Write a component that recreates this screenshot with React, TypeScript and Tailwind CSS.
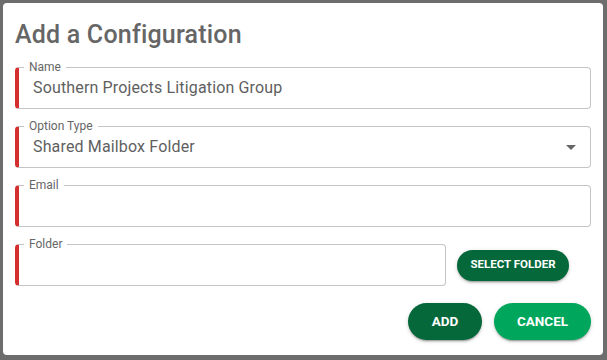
import React from 'react';

const btnShadow =
  'shadow-[0_3px_1px_-2px_rgba(0,0,0,0.2),0_2px_2px_0_rgba(0,0,0,0.14),0_1px_5px_0_rgba(0,0,0,0.12)]';

const Field: React.FC<{ label: string; value?: string; select?: boolean; className?: string }> = ({
  label,
  value,
  select,
  className = '',
}) => (
  <div
    className={`relative flex items-center h-[42px] rounded-[4px] border border-[#c4c4c4] border-l-4 border-l-[#d32f2f] pl-[14px] pr-[7px] ${className}`}
  >
    <span className="absolute left-[5px] top-[-7px] bg-white px-[5px] text-[12px] leading-[12px] text-[#666]">
      {label}
    </span>
    <span className="flex-1 text-[16px] leading-[20px] tracking-[0.15px] text-[#5f5f5f] truncate">{value}</span>
    {select && (
      <svg width="24" height="24" viewBox="0 0 24 24" className="fill-[#666]">
        <path d="M7 10l5 5 5-5z" />
      </svg>
    )}
  </div>
);

export default function App() {
  return (
    <div className="w-[607px] h-[360px] bg-[#6d6d6d] pt-[3px] pl-[3px] font-['Roboto',sans-serif]">
      <div className="w-[600px] h-[352px] bg-white rounded-[4px] pt-[16px] px-[12px] pb-[15px] flex flex-col">
        <h2 className="text-[25px] leading-[32px] font-medium tracking-[0.2px] text-[#666]">Add a Configuration</h2>

        <div className="mt-[16px] flex flex-col gap-[17px]">
          <Field label="Name" value="Southern Projects Litigation Group" />
          <Field label="Option Type" value="Shared Mailbox Folder" select />
          <Field label="Email" />
          <div className="flex items-center">
            <Field label="Folder" className="w-[431px]" />
            <button
              className={`ml-[11px] w-[112px] h-[31px] rounded-full bg-[#05683a] text-white text-[11.5px] font-bold uppercase ${btnShadow}`}
            >
              Select Folder
            </button>
          </div>
        </div>

        <div className="mt-[17px] flex justify-end gap-[12px]">
          <button
            className={`w-[74px] h-[37px] rounded-full bg-[#05683a] text-white text-[13.5px] font-bold uppercase ${btnShadow}`}
          >
            Add
          </button>
          <button
            className={`w-[97px] h-[37px] rounded-full bg-[#00a65c] text-white text-[13.5px] font-bold uppercase ${btnShadow}`}
          >
            Cancel
          </button>
        </div>
      </div>
    </div>
  );
}
